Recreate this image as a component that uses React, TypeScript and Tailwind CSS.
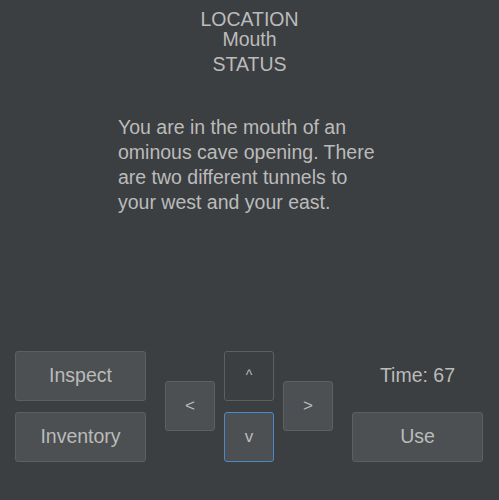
const btn =
  "flex items-center justify-center rounded-[3px] border border-[#5e6060] bg-[#4c5052] text-[#bbbbbb]";

export default function App() {
  return (
    <main
      className="h-[500px] w-[499px] bg-[#3c3f41] text-[#bbbbbb]"
      style={{ fontFamily: '"Liberation Sans", Arial, sans-serif' }}
    >
      <header className="flex flex-col items-center pt-[10px] text-[19.5px] leading-[19.5px]">
        <div>LOCATION</div>
        <div>Mouth</div>
        <div className="mt-[6px]">STATUS</div>
      </header>

      <p className="ml-[118px] mt-[40px] w-[268px] text-[19.5px] leading-[25px]">
        You are in the mouth of an ominous cave opening. There are two
        different tunnels to your west and your east.
      </p>

      <section className="ml-[15px] mt-[136px] flex text-[19.5px]">
        <div className="flex w-[131px] flex-col gap-[11px]">
          <button className={`${btn} h-[50px]`}>Inspect</button>
          <button className={`${btn} h-[50px]`}>Inventory</button>
        </div>

        <div className="ml-[19px] flex items-center">
          <button className={`${btn} h-[50px] w-[50px] text-[17px]`}>&lt;</button>
        </div>

        <div className="ml-[9px] flex flex-col gap-[11px]">
          <button className="flex h-[50px] w-[50px] items-center justify-center rounded-[3px] border border-[#5e6060] text-[14px] text-[#bbbbbb]">
            ^
          </button>
          <button className="flex h-[50px] w-[50px] items-center justify-center rounded-[3px] border border-[#4a88c7] bg-[#4c5052] text-[17px] text-[#bbbbbb]">
            v
          </button>
        </div>

        <div className="ml-[9px] flex items-center">
          <button className={`${btn} h-[50px] w-[50px] text-[17px]`}>&gt;</button>
        </div>

        <div className="ml-[19px] flex w-[131px] flex-col gap-[11px]">
          <div className="flex h-[50px] items-center justify-center">Time: 67</div>
          <button className={`${btn} h-[50px]`}>Use</button>
        </div>
      </section>
    </main>
  );
}
